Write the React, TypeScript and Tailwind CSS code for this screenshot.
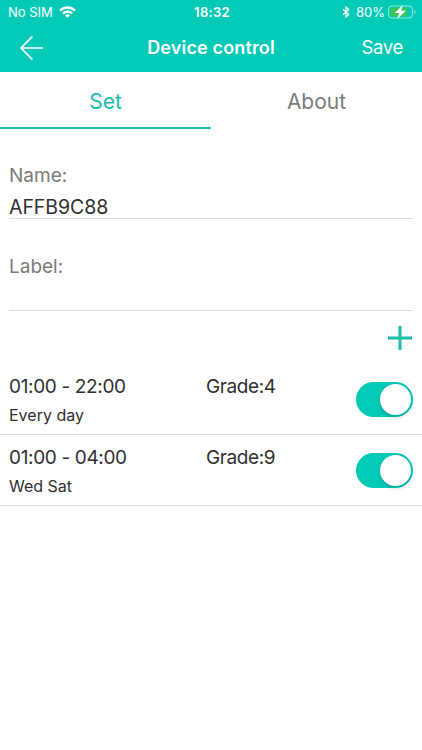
import { useState } from "react";

interface Schedule {
  id: number;
  time: string;
  grade: number;
  days: string;
  enabled: boolean;
}

const initialSchedules: Schedule[] = [
  { id: 1, time: "01:00 - 22:00", grade: 4, days: "Every day", enabled: true },
  { id: 2, time: "01:00 - 04:00", grade: 9, days: "Wed Sat", enabled: true },
];

function StatusBar() {
  return (
    <div className="grid h-6 grid-cols-3 items-center pl-2 pr-1.5 text-[13px] leading-6">
      <div className="flex items-center gap-1.5">
        <span className="whitespace-nowrap">No SIM</span>
        <svg width="17" height="12" viewBox="0 0 17 12" fill="none" stroke="currentColor" strokeWidth="2.3">
          <path d="M1 4.6a10.6 10.6 0 0 1 15 0" />
          <path d="M3.8 7.6a6.7 6.7 0 0 1 9.4 0" />
          <path d="M8.5 12 5.9 9.5a3.7 3.7 0 0 1 5.2 0z" fill="currentColor" stroke="none" />
        </svg>
      </div>
      <span className="text-center font-semibold tracking-[0.3px]">18:32</span>
      <div className="flex items-center justify-end">
        <svg className="mr-1.5" width="8" height="12" viewBox="0 0 8 12" fill="none" stroke="currentColor" strokeWidth="1.2">
          <path d="M1 3.2 6.8 8.6 4 11V1l2.8 2.4L1 8.8" />
        </svg>
        <span className="mr-[3px]">80%</span>
        <svg width="28" height="14" viewBox="0 0 28 14" fill="none">
          <rect x="0.5" y="1" width="24" height="12" rx="3.5" stroke="white" strokeOpacity="0.55" />
          <rect x="2" y="2.5" width="17.5" height="9" rx="2" fill="#35c759" />
          <path d="M26 5v4c.9-.3 1.4-1.1 1.4-2S26.9 5.3 26 5z" fill="white" fillOpacity="0.55" />
          <path d="M14.8 0 6.7 7.9h4.4L9.2 14l8.6-8.2h-4.6z" fill="white" />
        </svg>
      </div>
    </div>
  );
}

function Toggle({ checked, onChange }: { checked: boolean; onChange: () => void }) {
  return (
    <button
      type="button"
      role="switch"
      aria-checked={checked}
      onClick={onChange}
      className={`mt-px flex h-[35px] w-[57px] items-center rounded-full px-0.5 ${
        checked ? "justify-end bg-[#03cab7]" : "justify-start bg-gray-200"
      }`}
    >
      <span className="size-[31px] rounded-full bg-white shadow-[0_2px_4px_rgba(0,0,0,0.18)]" />
    </button>
  );
}

export default function App() {
  const [tab, setTab] = useState("Set");
  const [name, setName] = useState("AFFB9C88");
  const [label, setLabel] = useState("");
  const [schedules, setSchedules] = useState(initialSchedules);

  const toggleSchedule = (id: number) => {
    setSchedules(schedules.map((s) => (s.id === id ? { ...s, enabled: !s.enabled } : s)));
  };

  return (
    <div className="flex h-[750px] w-[422px] flex-col overflow-hidden bg-white font-['Inter','Liberation_Sans',sans-serif] text-[#2f2f2f]">
      {/* Header */}
      <header className="h-[72px] bg-[#03cab7] text-white">
        <StatusBar />
        <div className="grid h-[47px] grid-cols-[100px_1fr_100px] items-center">
          <button type="button" className="pl-5">
            <svg width="24" height="24" viewBox="0 0 24 24" fill="none" stroke="currentColor" strokeWidth="1.6">
              <path d="M12.5.5 1 12l11.5 11.5M1 12h22" />
            </svg>
          </button>
          <h1 className="text-center text-[18px] font-semibold tracking-[0.15px]">Device control</h1>
          <button type="button" className="pr-[19px] text-right text-[18.5px] tracking-[-0.3px]">
            Save
          </button>
        </div>
      </header>

      {/* Tabs */}
      <div className="grid h-[57px] grid-cols-2">
        {["Set", "About"].map((item) => (
          <button
            key={item}
            type="button"
            onClick={() => setTab(item)}
            className={`border-b-2 pt-[5px] text-[21px] ${
              tab === item ? "border-[#1abcac] text-[#1abcac]" : "border-transparent text-[#7b7b7b]"
            }`}
          >
            {item}
          </button>
        ))}
      </div>

      {/* Fields */}
      <div className="px-[9px] pt-8">
        <label className="block h-[58px] border-b border-[#dcdcdc]">
          <span className="block h-[31px] text-[19px] leading-[30px] text-[#7b7b7b]">Name:</span>
          <input
            value={name}
            onChange={(e) => setName(e.target.value)}
            className="block h-[30px] w-full text-[19.5px] tracking-[-0.05px] outline-none"
          />
        </label>
        <label className="mt-8 block h-[60px] border-b border-[#dcdcdc]">
          <span className="block h-[31px] text-[19px] leading-[31px] text-[#7b7b7b]">Label:</span>
          <input
            value={label}
            onChange={(e) => setLabel(e.target.value)}
            className="block h-7 w-full text-[19.5px] outline-none"
          />
        </label>
      </div>

      {/* Schedules */}
      <div className="flex h-[53px] justify-end pr-2.5 pt-[15px]">
        <button type="button" className="size-6" aria-label="Add schedule">
          <svg width="24" height="24" viewBox="0 0 24 24" stroke="#1abcac" strokeWidth="3">
            <path d="M12 0v24M0 12h24" />
          </svg>
        </button>
      </div>
      {schedules.map((s) => (
        <div key={s.id} className="flex h-[71px] shrink-0 items-center border-b border-[#dcdcdc] px-[9px]">
          <div className="w-[197px] pt-[3px]">
            <p className="text-[19px] leading-[30px] tracking-[-0.35px]">{s.time}</p>
            <p className="text-[16px] leading-[27px]">{s.days}</p>
          </div>
          <p className="mb-6 flex-1 text-[19px] leading-[30px] tracking-[-0.4px]">Grade:{s.grade}</p>
          <Toggle checked={s.enabled} onChange={() => toggleSchedule(s.id)} />
        </div>
      ))}
    </div>
  );
}
